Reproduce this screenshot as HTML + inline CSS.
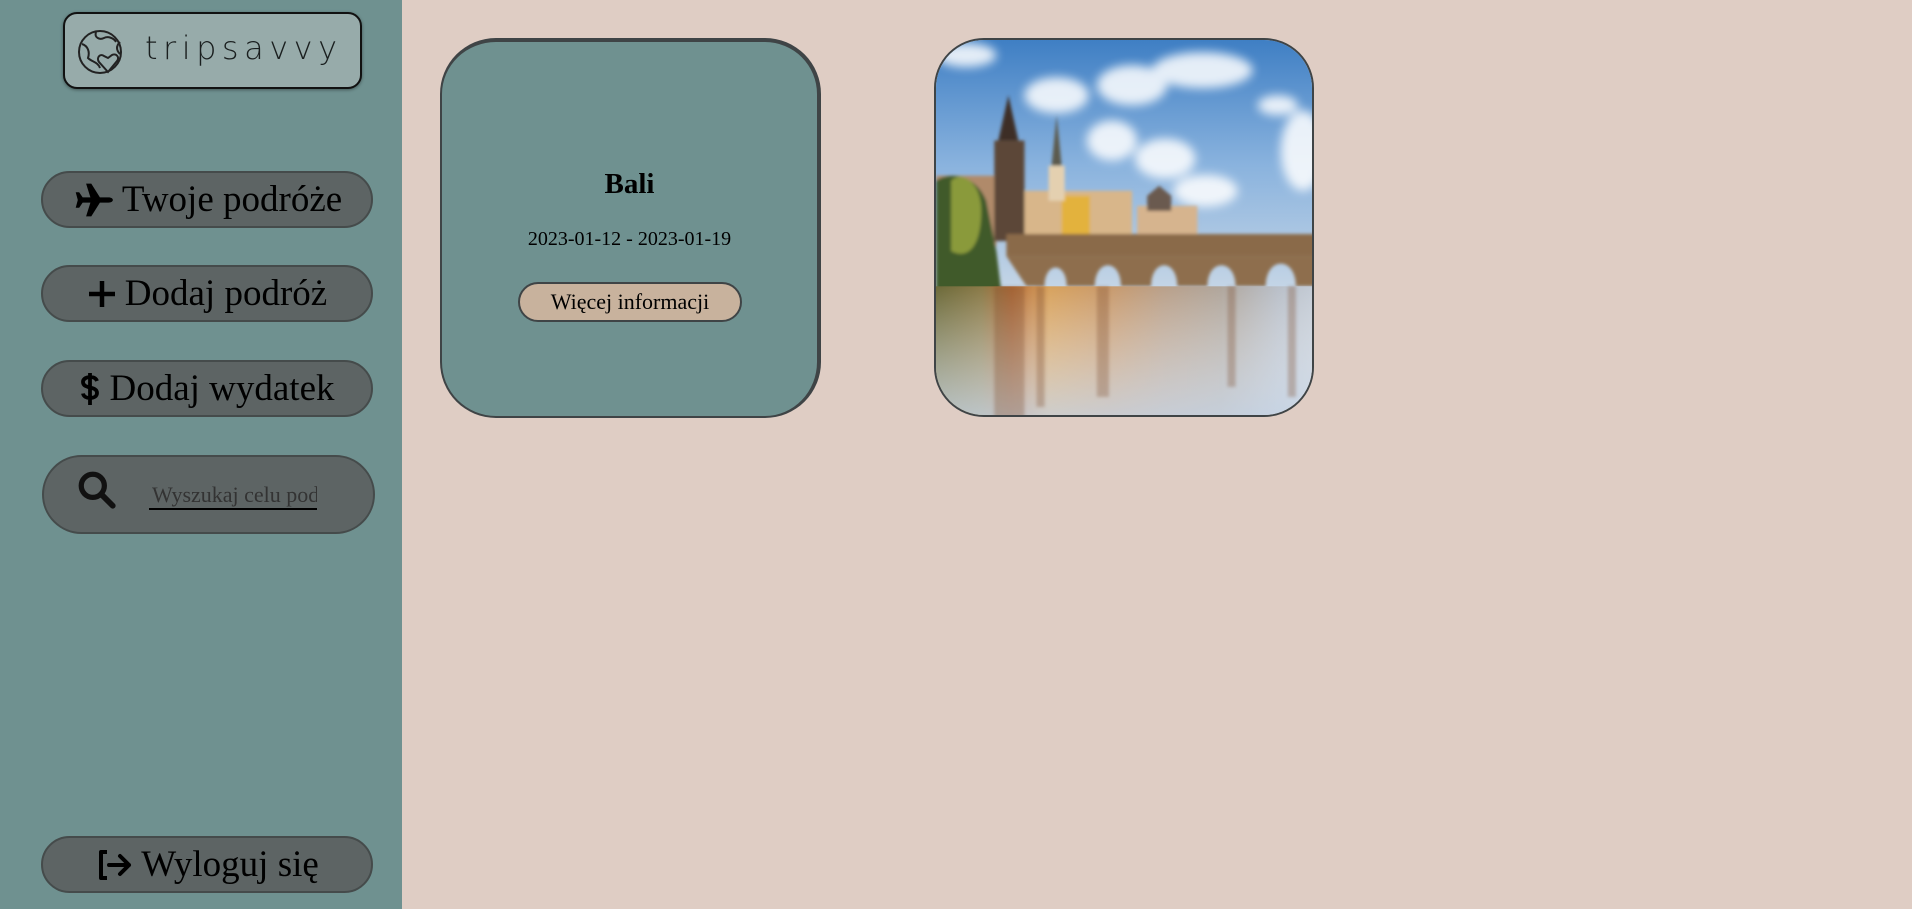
<!DOCTYPE html>
<html><head><meta charset="utf-8"><style>
*{box-sizing:border-box;margin:0;padding:0}
html,body{width:1912px;height:909px;overflow:hidden;background:#dfcdc4;font-family:"Liberation Serif",serif}
.side{position:absolute;left:0;top:0;width:402px;height:909px;background:#6f9190}
.logo{position:absolute;left:63px;top:12px;width:299px;height:77px;background:#97abaa;border:2px solid #111;border-radius:14px;box-shadow:0 1px 3px rgba(0,0,0,.4)}
.logo span{position:absolute;left:80px;top:15px;font-family:"DejaVu Sans","Liberation Sans",sans-serif;font-weight:200;font-size:32px;letter-spacing:5.5px;color:#1a1f1f}
.btn{position:absolute;left:41px;width:332px;height:57px;background:#5d6464;border:2px solid #454b4b;border-radius:29px;color:#000;font-size:37px;display:flex;align-items:center;justify-content:center;gap:8px}
.btn svg{flex:none}
.search{position:absolute;left:42px;top:455px;width:333px;height:79px;background:#5d6464;border:2px solid #454b4b;border-radius:40px}
.search .t{position:absolute;left:105px;top:26px;width:168px;height:27px;font-size:22px;color:#333;white-space:nowrap;overflow:hidden;border-bottom:2px solid #000;line-height:24px;padding-left:3px}
.card{position:absolute;left:440px;top:38px;width:381px;height:380px;background:#6f9190;border:2px solid #3f4446;border-top-width:4px;border-right-width:4px;border-radius:56px;text-align:center}
.card h2{position:absolute;left:0;right:0;top:126px;font-size:29px;font-weight:bold}
.card .d{position:absolute;left:0;right:0;top:186px;font-size:20px}
.card .b{position:absolute;left:76px;top:240px;width:224px;height:40px;background:#c8b29d;border:2px solid #3f4446;border-radius:20px;font-size:22px;line-height:36px}
.img{position:absolute;left:934px;top:38px;width:380px;height:379px;border:2px solid #3f4446;border-radius:50px;overflow:hidden}
</style></head><body>
<div class="side">
 <div class="logo">
  <svg style="position:absolute;left:11px;top:14px" width="52" height="48" viewBox="0 0 52 48" fill="none" stroke="#222" stroke-width="2"><circle cx="24" cy="24" r="21"/><path d="M6 16c6 2 8 8 6 14 4 4 10 4 12 10M20 4c-2 6 4 8 8 6 4-2 10 0 12 4M44 14c-4 4-4 8 0 12"/><path d="M32 44l-9-10c-3-4 1-9 5-6l4 2 4-3c4-2 8 2 5 6z" fill="#97abaa"/></svg>
  <span>tripsavvy</span>
 </div>
 <div class="btn" style="top:171px"><svg width="42" height="38" viewBox="0 0 24 22"><path d="M21 9.5c1.5 0 2.5.7 2.5 1.5s-1 1.5-2.5 1.5h-5l-5 8h-3l2.5-8H6l-2 3H2l1.2-4.5L2 6.5h2l2 3h4.5L8 1.5h3l5 8z" fill="#000"/></svg>Twoje podróże</div>
 <div class="btn" style="top:265px"><svg width="30" height="30" viewBox="0 0 30 30"><path d="M15 2v26M2 15h26" stroke="#000" stroke-width="4.5"/></svg>Dodaj podróż</div>
 <div class="btn" style="top:360px"><svg width="22" height="36" viewBox="0 0 22 36"><path d="M18 10c-1-3-4-4-7-4s-7 1.5-7 5 3 4.5 7 5.5 7 2 7 5.5-3.5 5-7 5-6.5-1.5-7-4.5M11 2v32" stroke="#000" stroke-width="3.8" fill="none"/></svg>Dodaj wydatek</div>
 <div class="search">
  <svg style="position:absolute;left:32px;top:12px" width="42" height="42" viewBox="0 0 40 40"><circle cx="16" cy="16" r="11" stroke="#111" stroke-width="5" fill="none"/><path d="M24 24l11 11" stroke="#111" stroke-width="5.5" stroke-linecap="round"/></svg>
  <div class="t">Wyszukaj celu podróży</div>
 </div>
 <div class="btn" style="top:836px"><svg width="38" height="32" viewBox="0 0 38 32"><path d="M12 3H6v26h6" stroke="#000" stroke-width="4" fill="none" stroke-linejoin="round"/><path d="M14 16h20M25 7l9 9-9 9" stroke="#000" stroke-width="4" fill="none" stroke-linejoin="round" stroke-linecap="round"/></svg>Wyloguj się</div>
</div>
<div class="card">
 <h2>Bali</h2>
 <div class="d">2023-01-12 - 2023-01-19</div>
 <div class="b">Więcej informacji</div>
</div>
<div class="img">
<svg width="380" height="379" viewBox="0 0 378 377" preserveAspectRatio="none">
<defs>
<linearGradient id="sky" x1="0" y1="0" x2="0" y2="1"><stop offset="0" stop-color="#3f7fc4"/><stop offset=".5" stop-color="#8ab3de"/><stop offset="1" stop-color="#c6d6e6"/></linearGradient>
<linearGradient id="wat" x1="0" y1="0" x2="1" y2="0"><stop offset="0" stop-color="#6c6a3a"/><stop offset=".12" stop-color="#8a7a48"/><stop offset=".2" stop-color="#b56e3a"/><stop offset=".3" stop-color="#d7a25e"/><stop offset=".45" stop-color="#c99a6c"/><stop offset=".6" stop-color="#b9a08a"/><stop offset=".75" stop-color="#b0a69c"/><stop offset=".9" stop-color="#b9bfc8"/><stop offset="1" stop-color="#c4ccd6"/></linearGradient>
<linearGradient id="wf" x1="0" y1="0" x2="0" y2="1"><stop offset="0" stop-color="#fff" stop-opacity="0"/><stop offset="1" stop-color="#c9d8ea" stop-opacity=".8"/></linearGradient>
<filter id="bl"><feGaussianBlur stdDeviation="5"/></filter>
<filter id="bl2"><feGaussianBlur stdDeviation="1.5"/></filter>
</defs>
<rect width="378" height="250" fill="url(#sky)"/>
<g fill="#fff" opacity=".85" filter="url(#bl)"><ellipse cx="120" cy="55" rx="32" ry="18"/><ellipse cx="195" cy="45" rx="35" ry="20"/><ellipse cx="265" cy="30" rx="50" ry="18"/><ellipse cx="175" cy="100" rx="25" ry="20"/><ellipse cx="228" cy="118" rx="30" ry="20"/><ellipse cx="268" cy="150" rx="32" ry="16"/><ellipse cx="365" cy="110" rx="22" ry="40"/><ellipse cx="30" cy="15" rx="30" ry="12"/><ellipse cx="340" cy="65" rx="20" ry="10"/></g>
<g filter="url(#bl2)">
<rect x="0" y="135" width="60" height="70" fill="#b08a6a"/>
<rect x="85" y="150" width="110" height="50" fill="#d8b68a"/>
<rect x="125" y="155" width="28" height="45" fill="#e3b23e"/>
<rect x="200" y="165" width="60" height="35" fill="#d6b48e"/>
<path d="M210 170v-15l12-10 12 10v15z" fill="#6a5a50"/>
<rect x="58" y="100" width="30" height="100" fill="#5b4637"/>
<path d="M62 100l10-45 10 45z" fill="#3c2e26"/>
<rect x="112" y="125" width="16" height="35" fill="#e4d0b0"/><path d="M115 125l5-50 5 50z" fill="#5b5a4e"/>
<path d="M0 140c15-10 40-5 50 20l10 50 5 40H0z" fill="#3f5a2a"/>
<path d="M15 140c10-10 30 0 30 30s-10 50-30 40z" fill="#8a9a3a"/>
<rect x="70" y="193" width="308" height="22" fill="#8a6a4a"/>
<path d="M70 215h308v30h-20c0-30-30-30-30 0h-30c0-28-28-28-28 0h-30c0-28-26-28-26 0h-30c0-28-26-28-26 0h-28c0-25-22-25-22 0h-18z" fill="#8e6e4e"/>
</g>
<rect x="0" y="245" width="378" height="132" fill="url(#wat)"/>
<rect x="0" y="245" width="378" height="132" fill="url(#wf)"/>
<g fill="#7a4a2a" opacity=".3" filter="url(#bl2)"><rect x="58" y="245" width="30" height="132"/><rect x="100" y="245" width="8" height="120"/><rect x="160" y="245" width="12" height="110"/><rect x="290" y="245" width="8" height="100"/><rect x="350" y="245" width="8" height="110"/></g>
</svg>
</div>
</body></html>
